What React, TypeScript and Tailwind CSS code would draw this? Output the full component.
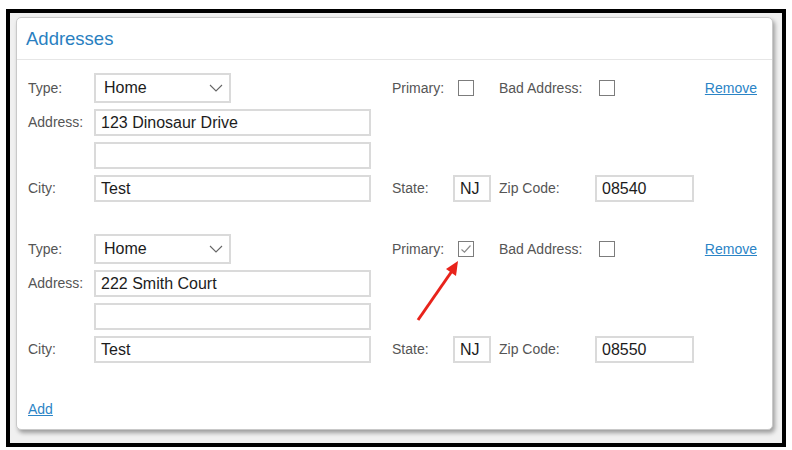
import React from "react";

type Address = {
  line1: string;
  city: string;
  state: string;
  zip: string;
  primary: boolean;
};

const ADDRESSES: Address[] = [
  { line1: "123 Dinosaur Drive", city: "Test", state: "NJ", zip: "08540", primary: false },
  { line1: "222 Smith Court", city: "Test", state: "NJ", zip: "08550", primary: true },
];

const font = { fontFamily: '"Liberation Sans", Arial, sans-serif' };

function Field({ value, className = "" }: { value: string; className?: string }) {
  return (
    <div
      className={`flex h-[27px] items-center border-2 border-[#dadada] bg-white pl-[5px] text-[16px] text-[#1c1c1c] ${className}`}
    >
      {value}
    </div>
  );
}

function Checkbox({ checked }: { checked: boolean }) {
  return (
    <div className="flex h-[16px] w-[16px] items-center justify-center border border-[#7c7c7c] bg-white">
      {checked && (
        <svg width="12" height="10" viewBox="0 0 12 10" fill="none">
          <path d="M1.5 5.5 L4.5 8.2 L10.5 1.5" stroke="#8a8a8a" strokeWidth="1.2" />
        </svg>
      )}
    </div>
  );
}

function AddressBlock({ address }: { address: Address }) {
  return (
    <div className="flex flex-col gap-[6px] text-[14px] text-[#555]">
      <div className="flex h-[30px] items-center">
        <div className="flex w-[364px] items-center">
          <span className="w-[66px]">Type:</span>
          <div className="flex h-[30px] w-[137px] items-center justify-between border-2 border-[#dadada] bg-white pl-[8px] pr-[6px] text-[16px] text-[#1c1c1c]">
            Home
            <svg width="14" height="8" viewBox="0 0 14 8" fill="none">
              <path d="M1 1 L7 7 L13 1" stroke="#666" strokeWidth="1.1" />
            </svg>
          </div>
        </div>
        <div className="flex flex-1 items-center">
          <span className="w-[66px]">Primary:</span>
          <Checkbox checked={address.primary} />
          <span className="ml-[25px] w-[100px]">Bad Address:</span>
          <Checkbox checked={false} />
          <a href="#" className="ml-auto text-[#2b84c6] underline">
            Remove
          </a>
        </div>
      </div>
      <div className="flex items-center">
        <span className="w-[66px]">Address:</span>
        <Field value={address.line1} className="w-[277px]" />
      </div>
      <div className="flex items-center">
        <span className="w-[66px]" />
        <Field value="" className="w-[277px]" />
      </div>
      <div className="flex items-center">
        <div className="flex w-[364px] items-center">
          <span className="w-[66px]">City:</span>
          <Field value={address.city} className="w-[277px]" />
        </div>
        <span className="w-[61px]">State:</span>
        <Field value={address.state} className="w-[38px]" />
        <span className="ml-[8px] w-[96px]">Zip Code:</span>
        <Field value={address.zip} className="w-[99px]" />
      </div>
    </div>
  );
}

export default function App() {
  return (
    <div className="h-[450px] w-[792px] bg-white pl-[6px] pt-[9px]" style={font}>
      <div className="relative h-[438px] w-[780px] border-4 border-black bg-[#f0f0f0] pb-[13px] pl-[6px] pr-[9px] pt-[4px]">
        <div className="flex h-full flex-col rounded-[5px] border border-[#c9c9c9] bg-white shadow-[2px_3px_4px_rgba(0,0,0,0.35)]">
          <div className="flex h-[42px] shrink-0 items-center border-b border-[#e6e6e6] pl-[9px] text-[18.5px] text-[#2a7fc1]">
            Addresses
          </div>
          <div className="flex flex-col pl-[11px] pr-[15px] pt-[13px]">
            <AddressBlock address={ADDRESSES[0]} />
            <div className="h-[32px]" />
            <AddressBlock address={ADDRESSES[1]} />
            <a href="#" className="mt-[36px] self-start text-[14px] text-[#2b84c6] underline">
              Add
            </a>
          </div>
        </div>

        {/* red annotation arrow */}
        <svg
          className="pointer-events-none absolute left-[-10px] top-[-13px]"
          width="792"
          height="450"
          viewBox="0 0 792 450"
        >
          <line x1="418" y1="320" x2="452" y2="271" stroke="#e8231b" strokeWidth="3" />
          <polygon points="458,261 446,269 456,276" fill="#e8231b" />
        </svg>
      </div>
    </div>
  );
}
